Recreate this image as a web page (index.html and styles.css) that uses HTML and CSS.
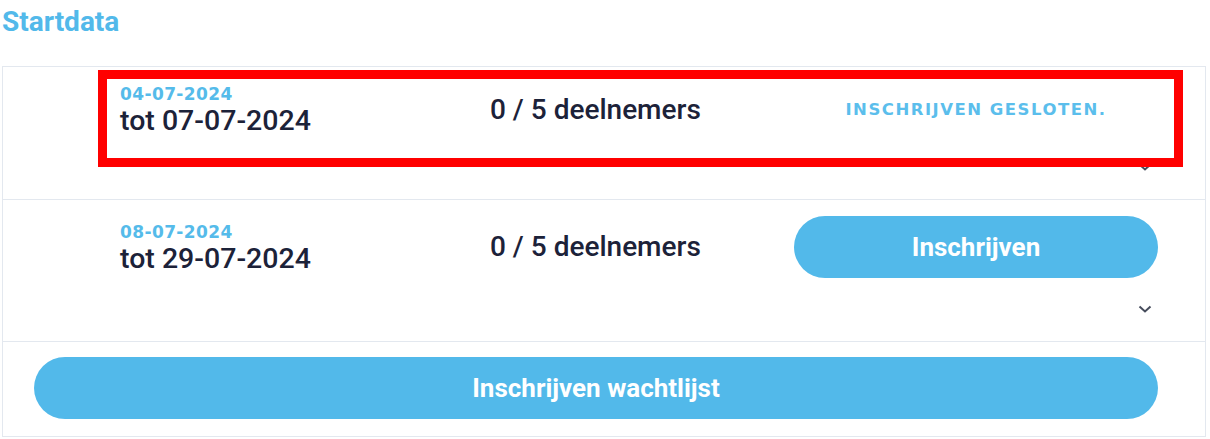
FILE: index.html
```html
<!DOCTYPE html>
<html lang="nl">

<head>
    <meta charset="UTF-8">
    <meta name="viewport" content="width=device-width, initial-scale=1.0">
    <title>Startdata</title>
    <link rel="stylesheet" href="styles.css">
</head>

<body>
    <div class="page">
        <h2 class="title">Startdata</h2>

        <div class="dates">
            <div class="slot">
                <div class="slot-main">
                    <div class="period">
                        <div class="period-start">04-07-2024</div>
                        <div class="period-end">tot 07-07-2024</div>
                    </div>
                    <div class="count">0 / 5 deelnemers</div>
                    <div class="action">
                        <span class="closed">Inschrijven gesloten.</span>
                    </div>
                </div>
                <div class="toggle">
                    <svg width="14" height="8" viewBox="0 0 14 8"><polyline points="1.5,1.5 7,6.5 12.5,1.5" fill="none" stroke="#464c5c" stroke-width="2" /></svg>
                </div>
            </div>

            <div class="slot">
                <div class="slot-main">
                    <div class="period">
                        <div class="period-start">08-07-2024</div>
                        <div class="period-end">tot 29-07-2024</div>
                    </div>
                    <div class="count">0 / 5 deelnemers</div>
                    <div class="action">
                        <button class="btn">Inschrijven</button>
                    </div>
                </div>
                <div class="toggle">
                    <svg width="14" height="8" viewBox="0 0 14 8"><polyline points="1.5,1.5 7,6.5 12.5,1.5" fill="none" stroke="#464c5c" stroke-width="2" /></svg>
                </div>
            </div>

            <div class="waitlist">
                <button class="btn btn-wide">Inschrijven wachtlijst</button>
            </div>
        </div>

        <!-- annotatie -->
        <div class="mark"></div>
    </div>
</body>

</html>
```

FILE: styles.css
```css
body {
    margin: 0;
    background: #fff;
    font-family: Roboto, "Liberation Sans", sans-serif;
    color: #1c2239;
}

.page {
    position: relative;
    width: 1210px;
    height: 439px;
    overflow: hidden;
}

.title {
    margin: 5px 0 0 2px;
    font-size: 28px;
    line-height: 34px;
    font-weight: 700;
    color: #52b9ea;
}

.dates {
    margin: 27px 4px 0 2px;
    border: 1px solid #e3e8ef;
}

.slot {
    border-bottom: 1px solid #e3e8ef;
    padding: 16px 47px 0 117px;
}

.slot-main {
    display: grid;
    grid-template-columns: 370px 304px 364px;
    align-items: center;
}

.period-start {
    font-family: "DejaVu Sans", sans-serif;
    font-weight: 700;
    font-size: 17px;
    line-height: 23px;
    letter-spacing: 0.4px;
    color: #55bbea;
}

.period-end {
    font-size: 28.5px;
    font-weight: 500;
    line-height: 30px;
}

.count {
    font-size: 28px;
    font-weight: 500;
    line-height: 32px;
}

.action {
    text-align: center;
}

.closed {
    font-family: "DejaVu Sans", sans-serif;
    font-weight: 700;
    font-size: 16.5px;
    letter-spacing: 1.5px;
    text-transform: uppercase;
    color: #5bbeec;
}

.btn {
    display: block;
    width: 100%;
    height: 62px;
    border: 0;
    border-radius: 31px;
    background: #52b9ea;
    color: #fff;
    font-family: Roboto, "Liberation Sans", sans-serif;
    font-size: 26px;
    font-weight: 700;
}

.toggle {
    display: flex;
    justify-content: flex-end;
    padding: 27px 6px 0 0;
    height: 8px;
    margin-bottom: 28px;
}

.waitlist {
    padding: 15px 47px 17px 31px;
}

.mark {
    position: absolute;
    left: 98px;
    top: 70px;
    width: 1085px;
    height: 97px;
    box-sizing: border-box;
    border: 9px solid #ff0000;
}
```
